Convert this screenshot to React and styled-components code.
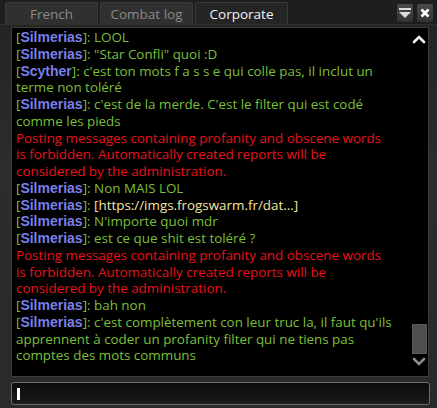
import React from 'react';
import styled, { createGlobalStyle } from 'styled-components';

const GlobalStyle = createGlobalStyle`
  html, body {
    margin: 0;
    padding: 0;
    background: #262626;
  }
`;

const Window = styled.div`
  width: 437px;
  height: 408px;
  background: linear-gradient(#232323, #2c2c2c 40%, #2a2a2a);
  display: flex;
  flex-direction: column;
  font-family: 'Open Sans', 'DejaVu Sans', sans-serif;
  overflow: hidden;
`;

const TabBar = styled.div`
  height: 24px;
  display: flex;
  align-items: flex-end;
  padding: 0 4px 0 5px;
  gap: 2px;
  background: #1e1e1e;
  border-bottom: 1px solid #2f2f2f;
`;

const Tab = styled.div`
  width: 91px;
  height: 21px;
  display: flex;
  align-items: center;
  justify-content: center;
  font-size: 13.5px;
  color: ${(p) => (p.$active ? '#f2f2f2' : '#8a8a8a')};
  background: ${(p) => (p.$active ? '#252525' : '#303030')};
  border: 1px solid #3a3a3a;
  border-bottom: none;
  border-radius: 2px 2px 0 0;
`;

const Spacer = styled.div`
  flex: 1;
`;

const IconButton = styled.div`
  width: 16px;
  height: 18px;
  margin-bottom: 2px;
  margin-left: 2px;
  background: linear-gradient(#4a4a4a, #333);
  border-radius: 2px;
  display: flex;
  align-items: center;
  justify-content: center;
`;

const ChatBox = styled.div`
  margin: 2px 8px 0 11px;
  height: 348px;
  background: #000;
  border: 1px solid #3c3c3c;
  display: flex;
`;

const Messages = styled.div`
  flex: 1;
  padding: 1px 0 0 4px;
  font-size: 13.4px;
  line-height: 16.75px;
  white-space: nowrap;
  overflow: hidden;
`;

const Line = styled.div`
  color: ${(p) => p.$color};
`;

const Name = styled.span`
  color: #7a7fe6;
  font-family: 'Liberation Sans', Arial, sans-serif;
  font-weight: bold;
  font-size: 14px;
`;

const Bracket = styled.span`
  color: #7cbf3a;
`;

const ScrollBar = styled.div`
  width: 16px;
  display: flex;
  flex-direction: column;
  align-items: center;
  padding: 6px 0 9px;
  margin-right: 1px;
`;

const Thumb = styled.div`
  width: 13px;
  height: 28px;
  background: #4e4e4e;
  border: 1px solid #5a5a5a;
  margin-bottom: 3px;
`;

const InputBox = styled.div`
  margin: 5px 7px 0 11px;
  height: 21px;
  border: 1px solid #6c6c6c;
  border-radius: 3px;
  background: linear-gradient(#0b0b0b, #1b1b1b);
  display: flex;
  align-items: center;
  padding-left: 5px;
`;

const Caret = styled.div`
  width: 3px;
  height: 12px;
  background: #fff;
`;

const GREEN = '#7cbf3a';
const RED = '#e8101a';
const LINK = '#f3e6a4';

const Chevron = ({ up, color }) => (
  <svg width="14" height="10" viewBox="0 0 14 10">
    <path
      d={up ? 'M2 8 L7 3 L12 8' : 'M2 2 L7 7 L12 2'}
      fill="none"
      stroke={color}
      strokeWidth="2.6"
      strokeLinecap="round"
    />
  </svg>
);

const msgs = [
  { name: 'Silmerias', lines: ['LOOL'] },
  { name: 'Silmerias', lines: ['"Star Confli" quoi :D'] },
  { name: 'Scyther', lines: ["c'est ton mots f a s s e qui colle pas, il inclut un", 'terme non toléré'] },
  { name: 'Silmerias', lines: ["c'est de la merde. C'est le filter qui est codé", 'comme les pieds'] },
  { system: true },
  { name: 'Silmerias', lines: ['Non MAIS LOL'] },
  { name: 'Silmerias', lines: ['[https://imgs.frogswarm.fr/dat...]'], link: true },
  { name: 'Silmerias', lines: ["N'importe quoi mdr"] },
  { name: 'Silmerias', lines: ['est ce que shit est toléré ?'] },
  { system: true },
  { name: 'Silmerias', lines: ['bah non'] },
  {
    name: 'Silmerias',
    lines: [
      "c'est complètement con leur truc la, il faut qu'ils",
      'apprennent à coder un profanity filter qui ne tiens pas',
      'comptes des mots communs',
    ],
  },
];

const systemLines = [
  'Posting messages containing profanity and obscene words',
  'is forbidden. Automatically created reports will be',
  'considered by the administration.',
];

const App = () => (
  <>
    <GlobalStyle />
    <Window>
      <TabBar>
        <Tab>French</Tab>
        <Tab>Combat log</Tab>
        <Tab $active>Corporate</Tab>
        <Spacer />
        <IconButton>
          <svg width="12" height="10" viewBox="0 0 12 10">
            <rect x="0" y="0" width="12" height="2" fill="#ddd" />
            <path d="M0 4 H12 L6 10 Z" fill="#ddd" />
          </svg>
        </IconButton>
        <IconButton>
          <svg width="10" height="10" viewBox="0 0 10 10">
            <path d="M1.5 1.5 L8.5 8.5 M8.5 1.5 L1.5 8.5" stroke="#fff" strokeWidth="2.6" />
          </svg>
        </IconButton>
      </TabBar>
      <ChatBox>
        <Messages>
          {msgs.map((m, i) =>
            m.system
              ? systemLines.map((t, j) => (
                  <Line key={`${i}-${j}`} $color={RED}>
                    {t}
                  </Line>
                ))
              : m.lines.map((t, j) => (
                  <Line key={`${i}-${j}`} $color={GREEN}>
                    {j === 0 && (
                      <>
                        <Bracket>[</Bracket>
                        <Name>{m.name}</Name>
                        <Bracket>]: </Bracket>
                      </>
                    )}
                    {m.link ? <span style={{ color: LINK }}>{t}</span> : t}
                  </Line>
                ))
          )}
        </Messages>
        <ScrollBar>
          <Chevron up color="#f4f4f4" />
          <Spacer />
          <Thumb />
          <Chevron color="#8a8a8a" />
        </ScrollBar>
      </ChatBox>
      <InputBox>
        <Caret />
      </InputBox>
    </Window>
  </>
);

export default App;
